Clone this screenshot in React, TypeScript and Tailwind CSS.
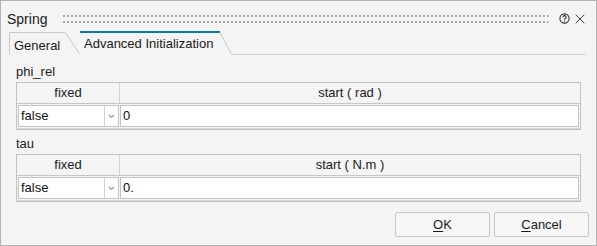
import { X } from 'lucide-react'

const tables = [
  { name: 'phi_rel', unit: 'rad', value: '0' },
  { name: 'tau', unit: 'N.m', value: '0.' }
]

function Grip() {
  return (
    <svg className="flex-1 h-[10px]">
      <defs>
        <pattern id="dots" width="4" height="6" patternUnits="userSpaceOnUse">
          <rect x="0" y="1" width="2" height="2" fill="#a6a6a6" />
        </pattern>
      </defs>
      <rect width="100%" height="10" fill="url(#dots)" />
    </svg>
  )
}

function ParamTable({ unit, value }: { unit: string; value: string }) {
  return (
    <div className="border border-[#c2c2c2]">
      <div className="flex h-[21px] border-b border-[#c6c6c6] text-[13px] text-[#1a1a1a]">
        <div className="w-[103px] border-r border-[#d2d2d2] flex items-center justify-center">fixed</div>
        <div className="flex-1 flex items-center justify-center">start ( {unit} )</div>
      </div>
      <div className="flex h-[25px] p-[1px] gap-[1px] border-b border-[#dadada]">
        <div className="w-[101px] flex bg-white border border-[#c4c4c4] text-[13px] text-[#111]">
          <span className="flex-1 pl-[2px] flex items-center">false</span>
          <span className="w-[14px] border-l border-[#d0d0d0] flex items-center justify-center">
            <svg width="7" height="5" viewBox="0 0 7 5">
              <polyline points="1,1 3.5,3.5 6,1" fill="none" stroke="#9a9a9a" strokeWidth="1.2" />
            </svg>
          </span>
        </div>
        <div className="flex-1 bg-white border border-[#c4c4c4] flex items-center pl-[2px] text-[13px] text-[#111]">
          {value}
        </div>
      </div>
    </div>
  )
}

export default function App() {
  return (
    <div className="w-[597px] h-[246px] bg-[#f4f4f4] border border-[#b4b4b4] flex flex-col font-['Liberation_Sans',Arial,sans-serif] text-[#1a1a1a] overflow-hidden">
      {/* Title bar */}
      <div className="h-[30px] flex items-center pl-[6px] pr-[8px] pt-[5px]">
        <span className="text-[14px] leading-[20px]">Spring</span>
        <div className="flex-1 flex ml-[16px] mr-[10px] pt-[1px]">
          <Grip />
        </div>
        <svg width="11" height="11" viewBox="0 0 11 11" className="mr-[2px]">
          <circle cx="5.5" cy="5.5" r="4.6" fill="none" stroke="#333" strokeWidth="1.1" />
          <path d="M3.9 4.3 A1.6 1.6 0 1 1 5.9 5.8 Q5.5 6 5.5 6.7" fill="none" stroke="#333" strokeWidth="1.1" />
          <rect x="5" y="7.6" width="1.1" height="1.1" fill="#333" />
        </svg>
        <X className="w-[16px] h-[16px] text-[#333]" strokeWidth={1.4} />
      </div>

      {/* Tabs */}
      <div className="h-[24px] flex pl-[8px] pr-[10px]">
        <div className="relative w-[71px] text-[13px] pl-[5px] pt-[5px]">
          <svg className="absolute inset-0" width="71" height="24">
            <polyline points="0.5,24 0.5,1.5 56.5,1.5 70.5,23" fill="none" stroke="#c8c8c8" />
          </svg>
          <span className="relative">General</span>
        </div>
        <div className="relative w-[152px] text-[13px] pl-[4px] pt-[3px]">
          <svg className="absolute inset-0" width="152" height="24">
            <line x1="0" y1="1" x2="140" y2="1" stroke="#0a78aa" strokeWidth="2" />
            <polyline points="140,1.5 151.5,23.5 152,23.5" fill="none" stroke="#c8c8c8" />
          </svg>
          <span className="relative">Advanced Initialization</span>
        </div>
        <div className="flex-1 border-b border-[#d6d6d6]" />
      </div>

      {/* Content */}
      <div className="flex-1 flex flex-col px-[15px] pt-[9px]">
        {tables.map((t, i) => (
          <div key={t.name} className={i > 0 ? 'mt-[6px]' : ''}>
            <div className="text-[13px] leading-[16px] mb-[2px]">{t.name}</div>
            <ParamTable unit={t.unit} value={t.value} />
          </div>
        ))}
      </div>

      {/* Buttons */}
      <div className="flex justify-end gap-[4px] pr-[7px] pb-[8px]">
        <button className="w-[95px] h-[25px] border border-[#c6c6c6] rounded-[2px] bg-[#f6f6f6] text-[13px]">
          <span className="underline underline-offset-2">O</span>K
        </button>
        <button className="w-[95px] h-[25px] border border-[#c6c6c6] rounded-[2px] bg-[#f6f6f6] text-[13px]">
          <span className="underline underline-offset-2">C</span>ancel
        </button>
      </div>
    </div>
  )
}
